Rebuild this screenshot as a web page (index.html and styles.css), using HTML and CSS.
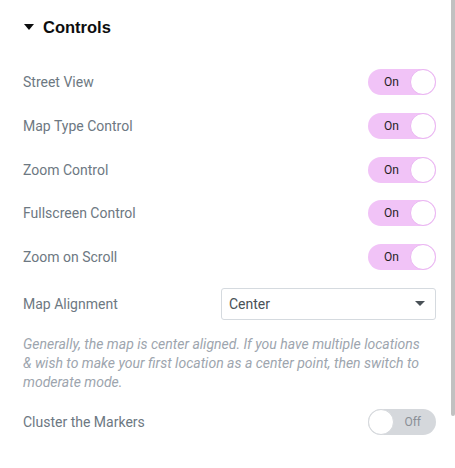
FILE: index.html
```html
<!DOCTYPE html>
<html lang="en">
<head>
  <meta charset="UTF-8" />
  <title>Controls</title>
  <link rel="stylesheet" href="styles.css">
</head>
<body>
  <div class="panel">
    <h2 class="section-title"><span class="caret"></span>Controls</h2>

    <div class="row">
      <span class="label">Street View</span>
      <span class="switch on"><span class="txt">On</span><span class="knob"></span></span>
    </div>
    <div class="row">
      <span class="label">Map Type Control</span>
      <span class="switch on"><span class="txt">On</span><span class="knob"></span></span>
    </div>
    <div class="row">
      <span class="label">Zoom Control</span>
      <span class="switch on"><span class="txt">On</span><span class="knob"></span></span>
    </div>
    <div class="row">
      <span class="label">Fullscreen Control</span>
      <span class="switch on"><span class="txt">On</span><span class="knob"></span></span>
    </div>
    <div class="row">
      <span class="label">Zoom on Scroll</span>
      <span class="switch on"><span class="txt">On</span><span class="knob"></span></span>
    </div>

    <div class="row select-row">
      <span class="label">Map Alignment</span>
      <div class="select">
        <span>Center</span>
        <span class="arrow"></span>
      </div>
    </div>
    <p class="desc">Generally, the map is center aligned. If you have multiple locations &amp; wish to make your first location as a center point, then switch to moderate mode.</p>

    <div class="row">
      <span class="label">Cluster the Markers</span>
      <span class="switch off"><span class="knob"></span><span class="txt">Off</span></span>
    </div>
  </div>
  <div class="scrollbar"></div>
</body>
</html>
```

FILE: styles.css
```css
* {
  box-sizing: border-box;
  font-family: Roboto, "Liberation Sans", sans-serif;
}

body {
  margin: 0;
  background: #fff;
  width: 455px;
  height: 468px;
  overflow: hidden;
  position: relative;
}

.panel {
  padding: 17px 19px 0 23px;
  width: 455px;
}

.section-title {
  margin: 0 0 32px;
  font-family: "Liberation Sans", Arial, sans-serif;
  font-size: 16.5px;
  font-weight: bold;
  color: #0c0d0e;
  display: flex;
  align-items: center;
  height: 20px;
}

.caret {
  width: 0;
  height: 0;
  border-left: 5px solid transparent;
  border-right: 5px solid transparent;
  border-top: 6px solid #0c0d0e;
  margin-right: 9px;
  margin-left: 1px;
}

.row {
  display: flex;
  justify-content: space-between;
  align-items: center;
  height: 26px;
  margin-bottom: 17.75px;
}

.label {
  font-size: 14px;
  color: #6d7882;
}

.switch {
  width: 68px;
  height: 26px;
  border-radius: 13px;
  display: flex;
  align-items: center;
  font-family: "Liberation Sans", Arial, sans-serif;
  font-size: 12px;
}

.switch.on {
  background: #f1c3f7;
  color: #1f1f1f;
  padding-left: 16px;
  justify-content: space-between;
}

.switch.off {
  background: #d5d8dc;
  color: #8a8f96;
  padding-right: 15px;
  justify-content: space-between;
}

.knob {
  width: 26px;
  height: 26px;
  border-radius: 50%;
  background: #fff;
}

.switch.on .knob {
  border: 1px solid #eab5f2;
}

.switch.off .knob {
  border: 1px solid #d5d8dc;
}

.select-row {
  height: 32px;
  margin-bottom: 15.5px;
}

.select {
  width: 215px;
  height: 32px;
  border: 1px solid #d5dadf;
  border-radius: 3px;
  display: flex;
  align-items: center;
  justify-content: space-between;
  padding: 0 10px 0 7px;
  font-size: 14px;
  color: #495157;
}

.arrow {
  width: 0;
  height: 0;
  border-left: 5px solid transparent;
  border-right: 5px solid transparent;
  border-top: 5px solid #495157;
}

.desc {
  margin: 0 0 16.5px;
  padding-right: 6px;
  font-size: 14px;
  line-height: 19px;
  font-style: italic;
  color: #9da5ae;
}

.scrollbar {
  position: absolute;
  top: 0;
  right: 0;
  width: 4px;
  height: 416px;
  background: #c1c1c1;
  border-bottom-left-radius: 3px;
  border-bottom-right-radius: 3px;
}
```
